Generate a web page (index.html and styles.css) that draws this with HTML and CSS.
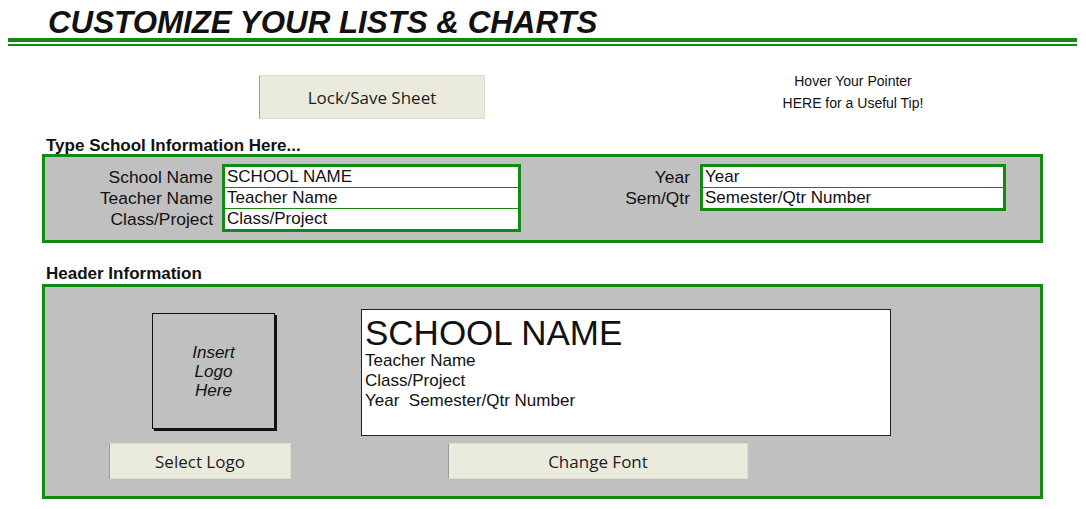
FILE: index.html
```html
<!DOCTYPE html>
<html lang="en">
<head>
<meta charset="UTF-8" />
<meta name="viewport" content="width=device-width, initial-scale=1" />
<title>Customize Your Lists &amp; Charts</title>
<link rel="stylesheet" href="styles.css">
</head>
<body>
  <header class="title-bar">
    <h1>CUSTOMIZE YOUR LISTS &amp; CHARTS</h1>
  </header>
  <div class="rule"></div>

  <!-- Кнопка и подсказка -->
  <div class="toolbar">
    <button class="sheet-btn lock-btn">Lock/Save Sheet</button>
    <div class="tip">Hover Your Pointer<br>HERE for a Useful Tip!</div>
  </div>

  <!-- Данные школы -->
  <section class="section">
    <div class="section-label">Type School Information Here...</div>
    <div class="panel info-panel">
      <div class="field-group group-left">
        <div class="labels">
          <div>School Name</div>
          <div>Teacher Name</div>
          <div>Class/Project</div>
        </div>
        <div class="cells">
          <div class="cell">SCHOOL NAME</div>
          <div class="cell">Teacher Name</div>
          <div class="cell">Class/Project</div>
        </div>
      </div>
      <div class="field-group group-right">
        <div class="labels">
          <div>Year</div>
          <div>Sem/Qtr</div>
        </div>
        <div class="cells">
          <div class="cell">Year</div>
          <div class="cell">Semester/Qtr Number</div>
        </div>
      </div>
    </div>
  </section>

  <!-- Шапка -->
  <section class="section header-section">
    <div class="section-label">Header Information</div>
    <div class="panel header-panel">
      <div class="preview-row">
        <div class="logo-box">Insert<br>Logo<br>Here</div>
        <div class="preview">
          <div class="preview-title">SCHOOL NAME</div>
          <div class="preview-line">Teacher Name</div>
          <div class="preview-line">Class/Project</div>
          <div class="preview-line">Year&nbsp; Semester/Qtr Number</div>
        </div>
      </div>
      <div class="button-row">
        <button class="sheet-btn logo-btn">Select Logo</button>
        <button class="sheet-btn font-btn">Change Font</button>
      </div>
    </div>
  </section>
</body>
</html>
```

FILE: styles.css
```css
body {
  margin: 0;
  background: #fff;
  color: #111;
  font-family: 'Liberation Sans', Arial, sans-serif;
}
.title-bar h1 {
  margin: 0;
  padding: 7px 0 0 48px;
  font-size: 31.3px;
  line-height: 31px;
  font-weight: 700;
  font-style: italic;
  color: #111;
}
.rule {
  margin: 0 9px 0 8px;
  height: 2px;
  border-top: 4px solid #138a13;
  border-bottom: 2px solid #138a13;
}
.toolbar {
  display: flex;
  align-items: flex-start;
  margin-top: 24px;
}
.sheet-btn {
  box-sizing: border-box;
  background: #ebebdd;
  border: 1px solid #dcdccf;
  border-left-color: #9c9c9c;
  color: #1c1c1c;
  font-family: 'Open Sans', 'Noto Sans', sans-serif;
  font-size: 17px;
  padding: 0;
  cursor: pointer;
}
.lock-btn {
  margin: 5px 0 0 259px;
  width: 226px;
  height: 44px;
}
.tip {
  margin-left: 268px;
  width: 200px;
  text-align: center;
  font-size: 14px;
  line-height: 22px;
}
.section {
  margin: 18px 43px 0 42px;
}
.header-section {
  margin-top: 22px;
}
.section-label {
  padding-left: 4px;
  font-weight: 700;
  font-size: 17px;
  line-height: 17px;
}
.header-section .section-label {
  margin-bottom: 2px;
}
.panel {
  background: #c0c0c0;
  border: 3px solid #138a13;
}
.info-panel {
  display: flex;
  padding: 7px 0 8px;
}
.field-group {
  display: flex;
  gap: 9px;
  font-size: 17px;
}
.labels {
  padding-top: 3px;
  text-align: right;
  line-height: 21px;
  font-size: 17.4px;
}
.group-left .labels {
  width: 168px;
}
.group-left .cells {
  width: 299px;
}
.group-right {
  gap: 10px;
}
.group-right .labels {
  width: 169px;
}
.group-right .cells {
  width: 306px;
}
.cells {
  box-sizing: border-box;
  align-self: flex-start;
  background: #fff;
  border: 3px solid #138a13;
}
.cell {
  height: 20px;
  line-height: 20px;
  padding-left: 2px;
  border-top: 1px solid #138a13;
}
.cell:first-child {
  border-top: none;
}
.header-panel {
  padding-bottom: 17px;
}
.preview-row {
  display: flex;
  align-items: flex-start;
}
.logo-box {
  box-sizing: border-box;
  display: flex;
  align-items: center;
  justify-content: center;
  margin: 26px 0 0 107px;
  width: 123px;
  height: 116px;
  border: 1px solid #111;
  box-shadow: 2px 2px 0 #111;
  text-align: center;
  font-style: italic;
  font-size: 17px;
  line-height: 19px;
}
.preview {
  box-sizing: border-box;
  margin: 22px 0 0 86px;
  width: 530px;
  height: 127px;
  padding: 5px 3px 0;
  background: #fff;
  border: 1px solid #222;
}
.preview-title {
  font-size: 35px;
  line-height: 36px;
}
.preview-line {
  font-size: 17px;
  line-height: 20px;
}
.button-row {
  display: flex;
  margin-top: 7px;
}
.logo-btn {
  margin-left: 64px;
  width: 182px;
  height: 36px;
}
.font-btn {
  margin-left: 157px;
  width: 300px;
  height: 36px;
}
```
